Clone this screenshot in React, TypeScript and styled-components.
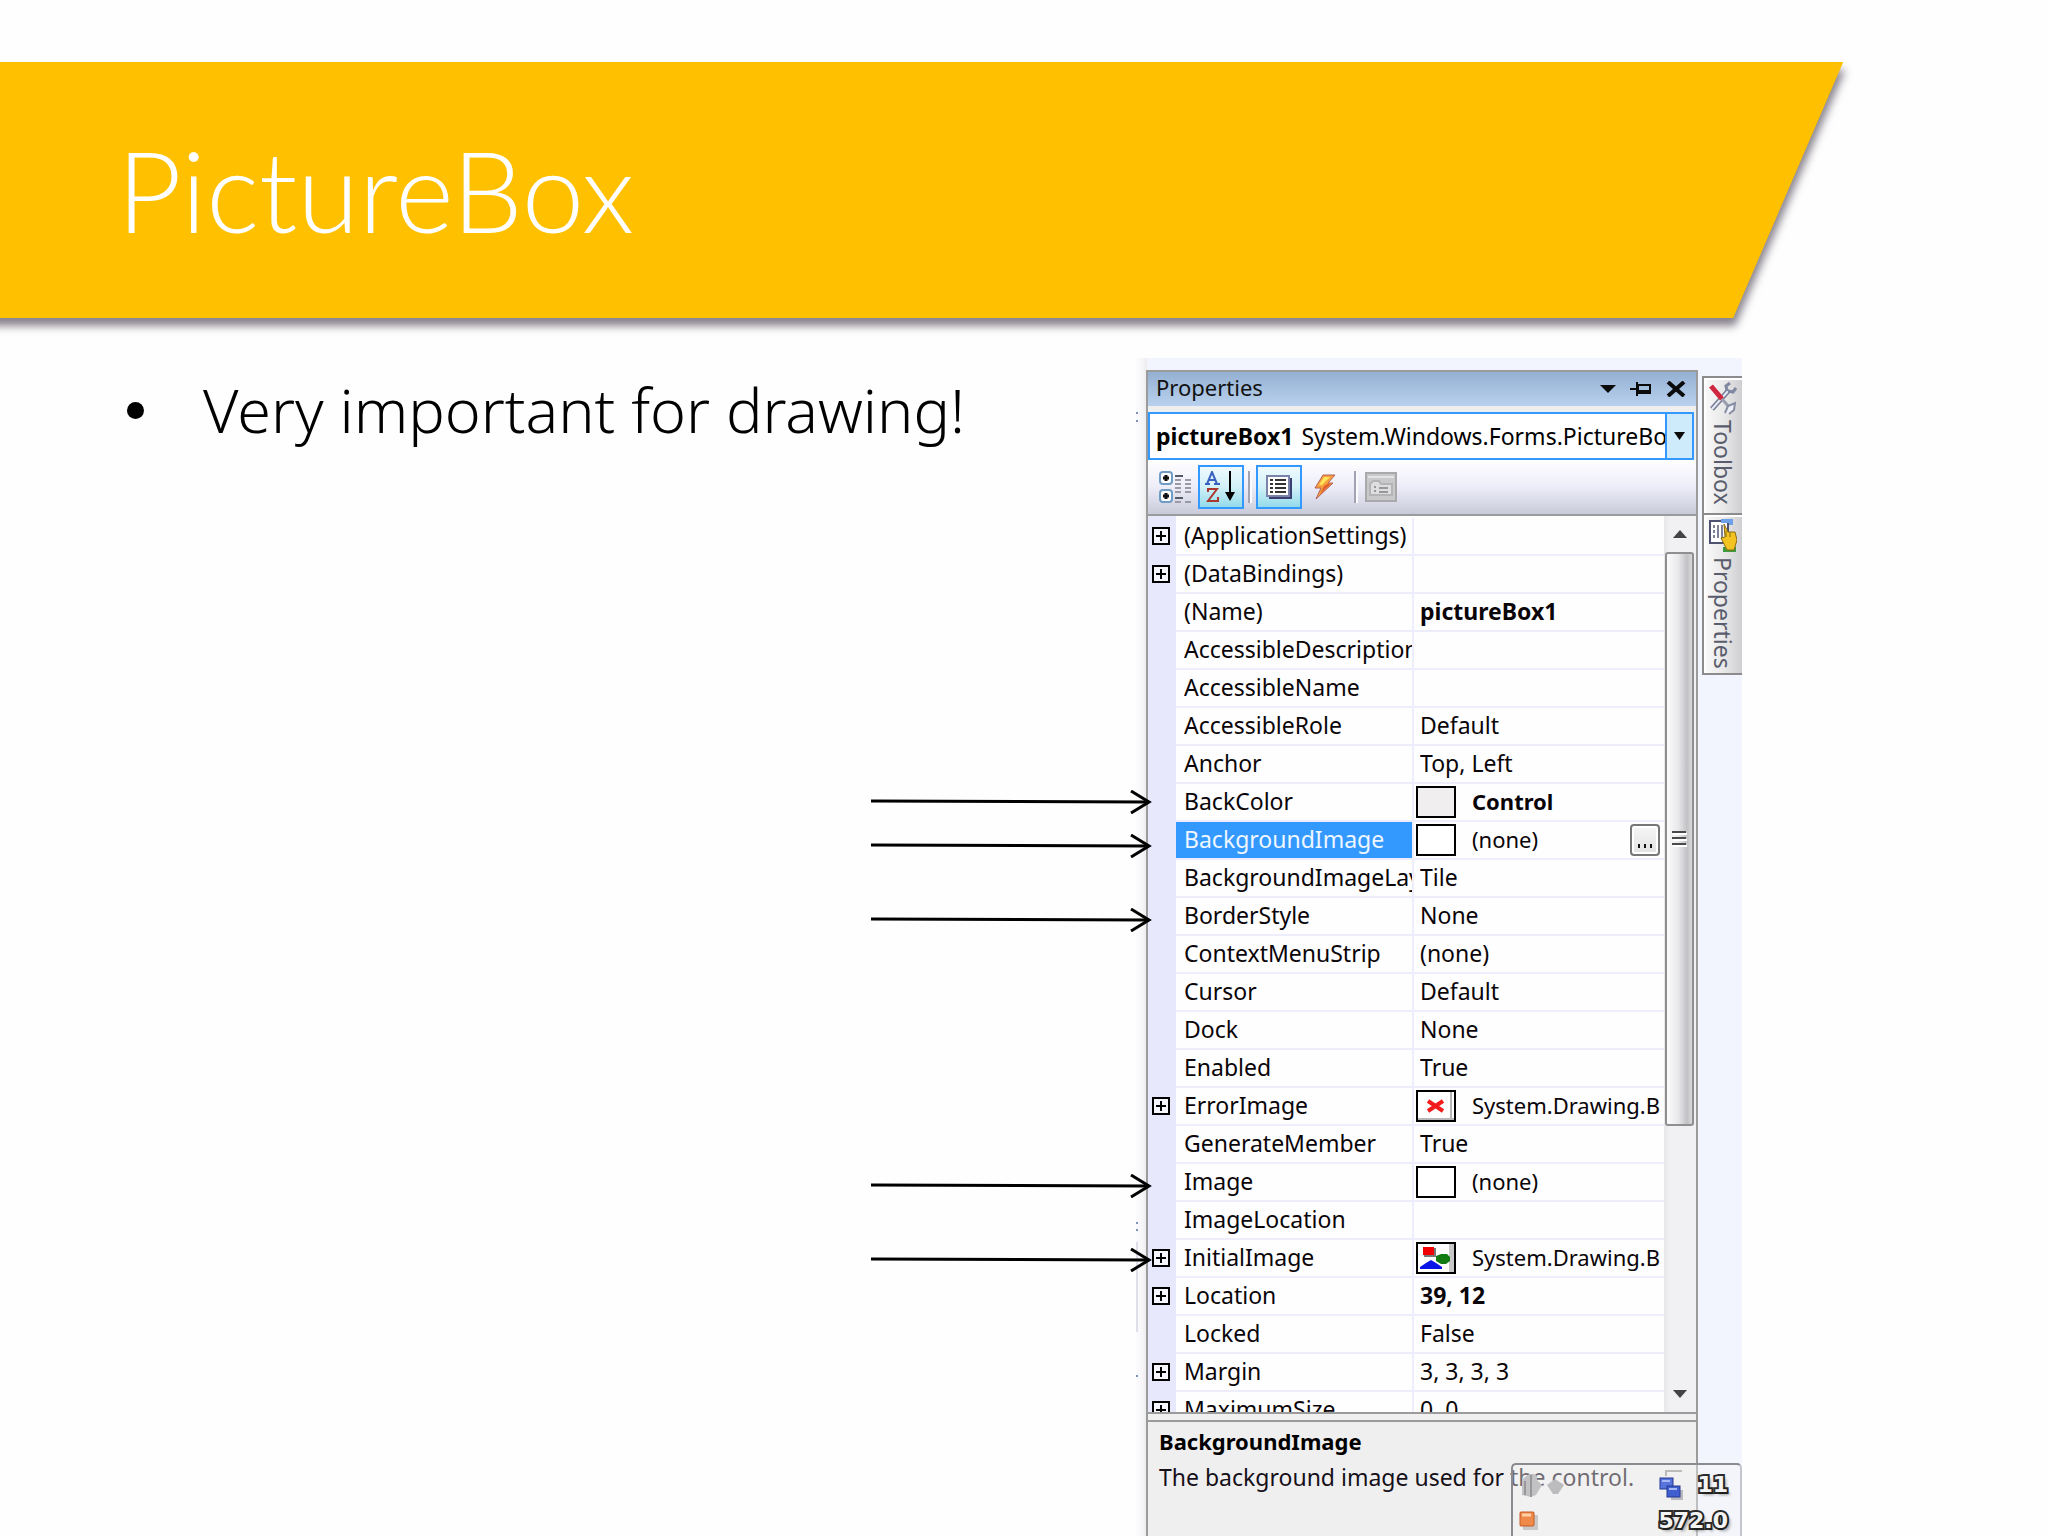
import React from "react";
import styled, { createGlobalStyle, css } from "styled-components";

const UI_FONT = `"Noto Sans", "Open Sans", sans-serif`;
const BLUE = "#3399ff";
const LINE = "#9b9b9b";

const GlobalStyle = createGlobalStyle`
  *, *::before, *::after { box-sizing: border-box; }
  body { margin: 0; background: #fefefe; color: #000; }
  button { margin: 0; padding: 0; border: 0; background: none; color: inherit; font: inherit; }
  svg { display: block; }
`;

const Slide = styled.main`
  display: flex;
  flex-direction: column;
  min-height: 100vh;
  padding-top: 62px;
  overflow: hidden;
`;

const BannerShadow = styled.header`
  width: 90%;
  filter: drop-shadow(2px 8px 4px rgba(40, 30, 50, 0.55));
`;

const Banner = styled.div`
  display: flex;
  align-items: center;
  height: 256px;
  margin-left: -20px;
  padding: 0 137px;
  background: #ffc000;
  clip-path: polygon(0 0, 100% 0, calc(100% - 110px) 100%, 0 100%);
`;

const Title = styled.h1`
  margin: 0;
  color: #fff;
  font: 300 112px/130px Lato, sans-serif;
`;

const Body = styled.div`
  display: grid;
  flex: 1;
  grid-template-columns: minmax(0, 1fr) 606px;
  margin-top: 40px;
  padding-right: 306px;
`;

const Bullets = styled.ul`
  margin: 0;
  padding: 12px 0 0 127px;
  list-style: none;
`;

const Bullet = styled.li`
  display: flex;
  align-items: center;
  gap: 59px;
  font: 300 61px/80px ${UI_FONT};
  white-space: nowrap;

  &::before {
    content: "";
    width: 17px;
    height: 17px;
    border-radius: 50%;
    background: #000;
  }
`;

const Figure = styled.section`
  position: relative;
  display: flex;
  align-items: stretch;
  gap: 4px;
  padding: 12px 0 0 10px;
  background: linear-gradient(90deg, #fbfbfd, #f7f5f7 6px, #ededf0 10px, #f3f5fe 12px);
  font: 400 23px/32px ${UI_FONT};
`;

const Panel = styled.div`
  display: flex;
  flex-direction: column;
  width: 552px;
  border: 2px solid ${LINE};
  border-bottom: 0;
  background: #f0eff0;
`;

const TitleBar = styled.div`
  display: flex;
  align-items: flex-start;
  gap: 14px;
  height: 34px;
  padding: 0 10px 0 8px;
  background: linear-gradient(#94b0d2, #b9d1ee);
`;

const PanelTitle = styled.h2`
  flex: 1;
  margin: 0;
  color: #111;
  font-size: 22px;
  font-weight: 400;
  line-height: 30px;
`;

const BarButton = styled.button`
  display: flex;
  align-items: center;
  height: 34px;
`;

const Combo = styled.label`
  position: relative;
  display: flex;
  height: 48px;
  margin: 6px 2px 0 0;
  border: 2px solid ${BLUE};
  background: #fff;
  line-height: 44px;
`;

const ComboFace = styled.span`
  display: flex;
  flex: 1;
  gap: 8px;
  min-width: 0;
  padding-left: 6px;
  overflow: hidden;
  white-space: nowrap;
`;

const ComboArrow = styled.span`
  display: grid;
  place-items: center;
  width: 27px;
  border-left: 2px solid ${BLUE};
  background: #cdebfa;
`;

const ComboSelect = styled.select`
  position: absolute;
  inset: 0;
  width: 100%;
  opacity: 0;
`;

const Toolbar = styled.div`
  display: flex;
  align-items: center;
  gap: 4px;
  height: 56px;
  padding-left: 8px;
  border-bottom: 2px solid ${LINE};
  background: linear-gradient(#fff, #ededf9 50%, #c9cad9);
`;

const ToolButton = styled.button<{ $active?: boolean }>`
  display: grid;
  place-items: center;
  width: 38px;
  height: 44px;
  ${(p) =>
    p.$active &&
    css`
      width: 46px;
      border: 2px solid ${BLUE};
      background: linear-gradient(#eefafd, #d3f1f8 50%, #93dbea);
    `}
`;

const Divider = styled.span<{ $spaced?: boolean }>`
  width: 4px;
  height: 32px;
  margin-left: ${(p) => (p.$spaced ? 6 : 0)}px;
  border-left: 2px solid #a2a2b0;
  border-right: 2px solid #fbfbff;
`;

const ListArea = styled.div`
  display: flex;
  height: 896px;
  overflow: hidden;
`;

const TableWrap = styled.div`
  flex: 1;
  min-width: 0;
  padding-top: 2px;
  background: linear-gradient(90deg, #e7e8fb 28px, #fefeff 28px);
`;

const Table = styled.table`
  width: 100%;
  table-layout: fixed;
  border-spacing: 0;
`;

const ExpandCell = styled.td`
  width: 28px;
  height: 38px;
  padding: 0 0 2px 4px;
  background: #e7e8fb;
`;

const NameCell = styled.th<{ $selected?: boolean }>`
  width: 238px;
  height: 38px;
  padding: 0 0 2px 8px;
  border-right: 2px solid #eeedfb;
  border-bottom: 2px solid #eeedfb;
  background: ${(p) => (p.$selected ? BLUE : "#fefeff")};
  background-clip: padding-box;
  color: ${(p) => (p.$selected ? "#eef6ff" : "#0a0508")};
  font-weight: 400;
  text-align: left;
  white-space: nowrap;
  overflow: hidden;
`;

const NameText = styled.span`
  display: block;
  overflow: hidden;
`;

const ValueCell = styled.td`
  height: 38px;
  padding: 0;
  border-bottom: 2px solid #eeedfb;
  color: #0a0508;
  overflow: hidden;
`;

const Value = styled.div<{ $bold?: boolean; $swatch?: boolean }>`
  display: flex;
  align-items: center;
  height: 36px;
  padding-left: ${(p) => (p.$swatch ? 2 : 6)}px;
  font-size: ${(p) => (p.$swatch ? 22 : 23)}px;
  font-weight: ${(p) => (p.$bold ? 700 : 400)};
  white-space: nowrap;
`;

const ValueText = styled.span`
  flex: 1;
  min-width: 0;
  padding-bottom: 2px;
  overflow: hidden;
`;

const Swatch = styled.span<{ $fill?: string }>`
  display: grid;
  place-items: center;
  flex: none;
  width: 40px;
  height: 32px;
  margin-right: 16px;
  border: 2px solid #000;
  background: ${(p) => p.$fill ?? "#fff"};
`;

const MoreButton = styled.button`
  display: flex;
  align-items: flex-end;
  justify-content: center;
  gap: 4px;
  width: 30px;
  height: 32px;
  margin-right: 4px;
  padding-bottom: 6px;
  border: 2px solid #777;
  border-radius: 4px;
  background: linear-gradient(#f6f6f6, #e2e2e4);
  box-shadow: inset 0 0 0 2px #fff;
`;

const Dot = styled.i`
  width: 2px;
  height: 4px;
  background: #111;
`;

const Scrollbar = styled.div`
  display: flex;
  flex-direction: column;
  width: 32px;
  background: linear-gradient(90deg, #e8e8ea, #f1f0f2 6px);
`;

const ScrollButton = styled.button`
  display: grid;
  place-items: center;
  height: 36px;
`;

const Thumb = styled.div`
  height: 574px;
  margin: 0 2px 0 1px;
  padding: 275px 0 0 5px;
  border: 2px solid #8f8f92;
  border-radius: 3px;
  background: linear-gradient(90deg, #fbfbfb, #e9e9eb 45%, #c2c2c6 80%, #d8d8da);
`;

const Track = styled.div`
  flex: 1;
`;

const Splitter = styled.div`
  height: 10px;
  border-top: 2px solid ${LINE};
  border-bottom: 2px solid ${LINE};
  background: #f1f0f1;
`;

const Description = styled.div`
  flex: 1;
  padding: 1px 8px 6px 11px;
  line-height: 36px;
`;

const DescriptionName = styled.h3`
  margin: 0;
  font-size: 22px;
  font-weight: 700;
`;

const DescriptionText = styled.p`
  margin: 0;
  color: #161018;
`;

const SideTabs = styled.nav`
  width: 40px;
  padding-top: 6px;
`;

const SideTab = styled.button<{ $length: number }>`
  display: flex;
  align-items: center;
  gap: 4px;
  width: 40px;
  height: ${(p) => p.$length}px;
  padding: 4px 6px 0 6px;
  border: 2px solid #8c8c8e;
  border-width: 2px 0 0 2px;
  background: linear-gradient(90deg, #fafafa, #e9e9e9 50%, #cfcfd2);
  box-shadow: inset 2px 2px 0 #fff;
  color: #595c6c;
  line-height: 30px;
  writing-mode: vertical-rl;

  &:last-child {
    border-bottom-width: 2px;
  }
`;

const Arrow = styled.svg<{ $top: number }>`
  position: absolute;
  left: -266px;
  top: ${(p) => p.$top}px;
`;

const EdgeMarks = styled.svg`
  position: absolute;
  left: 0;
  top: 0;
`;

const Gadget = styled.aside`
  position: absolute;
  right: 0;
  bottom: 0;
  width: 231px;
  height: 73px;
  padding: 2px 12px 0 6px;
  border: 2px solid #8a8a90;
  border-bottom: 0;
  border-right-color: #c4c4cc;
  border-radius: 5px 5px 0 0;
  background: rgba(244, 244, 244, 0.4);
`;

const GadgetRow = styled.div`
  display: flex;
  align-items: center;
  justify-content: space-between;
  height: 36px;
`;

const GadgetCount = styled.span`
  display: flex;
  align-items: center;
  gap: 14px;
`;

const Reading = styled.span`
  color: #f4f4f4;
  font: 700 22px/36px "DejaVu Sans", sans-serif;
  paint-order: stroke fill;
  -webkit-text-stroke: 4px #2b2b2b;
  text-shadow: 3px 3px 3px rgba(0, 0, 0, 0.35);
`;

const PlusBox = () => (
  <svg width="18" height="18" viewBox="0 0 18 18">
    <rect x="1" y="1" width="16" height="16" fill="#f6f6ff" stroke="#000" strokeWidth="2" />
    <path d="M4 9h10M9 4v10" stroke="#000" strokeWidth="2" />
  </svg>
);

const Triangle = ({ up, w = 16, color = "#0b0b0b" }: { up?: boolean; w?: number; color?: string }) => (
  <svg width={w} height="8" viewBox="0 0 16 8" preserveAspectRatio="none">
    <path d={up ? "M0 8L8 0l8 8z" : "M0 0h16L8 8z"} fill={color} />
  </svg>
);

const Pin = () => (
  <svg width="22" height="16" viewBox="0 0 22 16">
    <path d="M0 8h7M7 1v14M8 4h12v8M8 4v8" fill="none" stroke="#0b0b0b" strokeWidth="2" />
    <path d="M8 11h13" stroke="#0b0b0b" strokeWidth="4" />
  </svg>
);

const Cross = () => (
  <svg width="20" height="16" viewBox="0 0 20 16">
    <path d="M2 1l16 14M18 1L2 15" stroke="#0b0b0b" strokeWidth="4" />
  </svg>
);

const CategorizedIcon = () => (
  <svg width="32" height="32" viewBox="0 0 32 32">
    {[1, 19].map((y) => (
      <g key={y}>
        <rect x="1" y={y} width="12" height="12" rx="3" fill="#fff" stroke="#6f9cc4" strokeWidth="2" />
        <path d={`M4 ${y + 6}h6M7 ${y + 3}v6`} stroke="#111" strokeWidth="3" />
      </g>
    ))}
    <path d="M16 5h8M16 27h8" stroke="#555b66" strokeWidth="2" />
    <path d="M16 9h6M16 13h6M16 17h6M16 21h6M16 31h6M26 9h6M26 13h6M26 17h6M26 21h6M26 31h6" stroke="#9a9aa6" strokeWidth="2" />
  </svg>
);

const SortIcon = () => (
  <svg width="32" height="32" viewBox="0 0 32 32">
    <path d="M2 13L7 1l5 12M4 9h7M0 13h5M9 13h6" fill="none" stroke="#3a62c0" strokeWidth="2" />
    <path d="M3 21v-3h9L3 30h10v-4" fill="none" stroke="#a9382f" strokeWidth="2" />
    <path d="M25 0v24" stroke="#000" strokeWidth="2" />
    <path d="M20 21h10l-5 9z" fill="#000" />
  </svg>
);

const ListIcon = () => (
  <svg width="26" height="24" viewBox="0 0 26 24">
    <path d="M3 3h23v21H3z" fill="#3c3f73" />
    <path d="M1 1h22v20H1z" fill="#fff" stroke="#7b83a8" strokeWidth="2" />
    <path d="M4 5h3M4 9h3M4 13h3M4 17h3M9 5h11M9 9h11M9 13h11M9 17h11" stroke="#333" strokeWidth="2" />
  </svg>
);

const BoltIcon = () => (
  <svg width="22" height="26" viewBox="0 0 22 26">
    <path d="M9 1h12l-7 8h5L2 25l5-11H1z" fill="#f6a13c" stroke="#b4605a" strokeWidth="1" />
    <path d="M10 3h6l-8 8H5z" fill="#ffe35a" />
    <path d="M13 10h4L6 20l4-8z" fill="#e2602c" />
  </svg>
);

const PageIcon = () => (
  <svg width="32" height="30" viewBox="0 0 32 30">
    <path d="M1 1h30v28H1z" fill="#c9c9cc" stroke="#a9a9ac" strokeWidth="2" />
    <path d="M3 5h26" stroke="#e3e3e6" strokeWidth="2" />
    <path d="M5 23V12l3-3h6l2 3h11v11z" fill="#dededf" stroke="#b4b4b7" strokeWidth="2" />
    <path d="M9 15h2M9 19h2M14 16h9M14 20h9" stroke="#98989b" strokeWidth="2" />
  </svg>
);

const ErrorGlyph = () => (
  <svg width="36" height="28" viewBox="0 0 36 28">
    <path d="M33 0v28M0 27h36" stroke="#b6b6b6" strokeWidth="2" />
    <path d="M10 9l15 10M25 9L10 19" stroke="#f31b1b" strokeWidth="4" />
  </svg>
);

const ShapesGlyph = () => (
  <svg width="36" height="28" viewBox="0 0 36 28">
    <path d="M31 0h5v28h-5z" fill="#c8c8c8" />
    <path d="M6 4h12v9H6z" fill="#777" />
    <path d="M5 3h11v8H5z" fill="#f00000" />
    <path d="M18 12l5-2h6l3 3v4l-4 3h-5l-5-3z" fill="#117a11" />
    <path d="M2 25v-2l6-4 5-3 5 3 6 4v2z" fill="#0b14e6" />
  </svg>
);

const ToolboxIcon = () => (
  <svg width="28" height="34" viewBox="0 0 28 34">
    <path d="M3 27L20 8" stroke="#767c92" strokeWidth="5" />
    <path d="M3 27L20 8" stroke="#e8ecf8" strokeWidth="2" />
    <path d="M18 9l-1-5 4-3M19 9l5 1 3-4" fill="none" stroke="#8087a0" strokeWidth="3" />
    <path d="M2 4l11 13" stroke="#cf2740" strokeWidth="5" />
    <path d="M13 17l8 9" stroke="#9a9fb0" strokeWidth="3" />
    <path d="M16 31l3-7 7-3-1 7-5 4" fill="#eef0f8" stroke="#868ca2" strokeWidth="2" />
  </svg>
);

const PropertiesIcon = () => (
  <svg width="28" height="34" viewBox="0 0 28 34">
    <path d="M1 2h18v22H1z" fill="#fff" stroke="#4c5270" strokeWidth="2" />
    <path d="M12 2h10v4" fill="none" stroke="#6ea0ea" strokeWidth="4" />
    <path d="M5 6v3M5 11v3M5 16v3M9 6v13M13 6v13" stroke="#7d8298" strokeWidth="2" />
    <path d="M14 28h13v5H14z" fill="#3d9a3d" />
    <path d="M15 5l4 8 7 0 2 8-3 10h-7l-6-12 4-1z" fill="#f3c321" stroke="#8a6a10" strokeWidth="1" />
    <path d="M17 12v6M21 13v5" stroke="#8a6a10" strokeWidth="1" />
  </svg>
);

const Grip = () => (
  <svg width="16" height="18" viewBox="0 0 16 18">
    <path d="M0 3h14M0 9h14M0 15h14" stroke="#4a4a4a" strokeWidth="2" />
    <path d="M1 5h14M1 11h14M1 17h14" stroke="#fff" strokeWidth="2" />
  </svg>
);

const DiskIcon = () => (
  <svg width="46" height="28" viewBox="0 0 46 28">
    <path d="M3 24V9q9-10 15-4v4l5 5-6 10-5 2z" fill="#c2c2c4" />
    <path d="M6 24V10M12 26V4" stroke="#98989b" strokeWidth="2" />
    <path d="M28 14l8-6 9 6-6 9h-5z" fill="#bcbcbe" />
  </svg>
);

const CpuIcon = () => (
  <svg width="24" height="30" viewBox="0 0 24 30">
    <path d="M7 6V1h16" fill="none" stroke="#bbb" strokeWidth="2" />
    <path d="M12 20h12v10H12z" fill="#b9b9c0" />
    <rect x="1" y="8" width="13" height="11" fill="#5674dc" stroke="#25398f" strokeWidth="1" />
    <rect x="8" y="16" width="13" height="11" fill="#3f5fd0" stroke="#25398f" strokeWidth="1" />
    <path d="M3 11h8M10 19h8" stroke="#a5b8f5" strokeWidth="2" />
  </svg>
);

const OrangeIcon = () => (
  <svg width="20" height="20" viewBox="0 0 20 20">
    <path d="M4 4h15v15H4z" fill="#c9c9c9" />
    <rect x="1" y="1" width="14" height="14" rx="1" fill="#f08a4b" stroke="#c45a22" strokeWidth="1" />
    <path d="M3 4h9" stroke="#ffd0a8" strokeWidth="3" />
  </svg>
);

type Property = {
  name: string;
  value?: string;
  expand?: boolean;
  bold?: boolean;
  selected?: boolean;
  swatch?: "plain" | "control" | "error" | "shapes";
};

const properties: Property[] = [
  { name: "(ApplicationSettings)", expand: true },
  { name: "(DataBindings)", expand: true },
  { name: "(Name)", value: "pictureBox1", bold: true },
  { name: "AccessibleDescription" },
  { name: "AccessibleName" },
  { name: "AccessibleRole", value: "Default" },
  { name: "Anchor", value: "Top, Left" },
  { name: "BackColor", value: "Control", bold: true, swatch: "control" },
  { name: "BackgroundImage", value: "(none)", selected: true, swatch: "plain" },
  { name: "BackgroundImageLay", value: "Tile" },
  { name: "BorderStyle", value: "None" },
  { name: "ContextMenuStrip", value: "(none)" },
  { name: "Cursor", value: "Default" },
  { name: "Dock", value: "None" },
  { name: "Enabled", value: "True" },
  { name: "ErrorImage", value: "System.Drawing.B", expand: true, swatch: "error" },
  { name: "GenerateMember", value: "True" },
  { name: "Image", value: "(none)", swatch: "plain" },
  { name: "ImageLocation" },
  { name: "InitialImage", value: "System.Drawing.B", expand: true, swatch: "shapes" },
  { name: "Location", value: "39, 12", expand: true, bold: true },
  { name: "Locked", value: "False" },
  { name: "Margin", value: "3, 3, 3, 3", expand: true },
  { name: "MaximumSize", value: "0, 0", expand: true },
];

const arrowTops = [432, 476, 550, 816, 890];

const PropertyRow = ({ name, value, expand, bold, selected, swatch }: Property) => (
  <tr>
    <ExpandCell>
      {expand && (
        <button aria-label={`Expand ${name}`}>
          <PlusBox />
        </button>
      )}
    </ExpandCell>
    <NameCell scope="row" $selected={selected}>
      <NameText>{name}</NameText>
    </NameCell>
    <ValueCell>
      <Value $bold={bold} $swatch={!!swatch}>
        {swatch && (
          <Swatch $fill={swatch === "control" ? "#f0eeee" : undefined}>
            {swatch === "error" && <ErrorGlyph />}
            {swatch === "shapes" && <ShapesGlyph />}
          </Swatch>
        )}
        <ValueText>{value}</ValueText>
        {selected && (
          <MoreButton aria-label="Browse">
            <Dot />
            <Dot />
            <Dot />
          </MoreButton>
        )}
      </Value>
    </ValueCell>
  </tr>
);

export default function App() {
  return (
    <Slide>
      <GlobalStyle />
      <BannerShadow>
        <Banner>
          <Title>PictureBox</Title>
        </Banner>
      </BannerShadow>
      <Body>
        <Bullets>
          <Bullet>Very important for drawing!</Bullet>
        </Bullets>
        <Figure>
          <EdgeMarks width="4" height="1060" viewBox="0 0 4 1060">
            <path d="M0 55h2M0 63h2M0 865h2M0 872h2M0 1018h2" stroke="#7f93b5" strokeWidth="2" />
            <path d="M1 884v90" stroke="#c3c3d6" strokeWidth="1" />
          </EdgeMarks>
          <Panel>
            <TitleBar>
              <PanelTitle>Properties</PanelTitle>
              <BarButton aria-label="Window position">
                <Triangle />
              </BarButton>
              <BarButton aria-label="Auto hide">
                <Pin />
              </BarButton>
              <BarButton aria-label="Close">
                <Cross />
              </BarButton>
            </TitleBar>
            <Combo>
              <ComboFace>
                <b>pictureBox1</b>
                <span>System.Windows.Forms.PictureBo</span>
              </ComboFace>
              <ComboArrow>
                <Triangle w={11} />
              </ComboArrow>
              <ComboSelect aria-label="Component">
                <option>pictureBox1</option>
              </ComboSelect>
            </Combo>
            <Toolbar>
              <ToolButton aria-label="Categorized">
                <CategorizedIcon />
              </ToolButton>
              <ToolButton $active aria-label="Alphabetical">
                <SortIcon />
              </ToolButton>
              <Divider />
              <ToolButton $active aria-label="Properties">
                <ListIcon />
              </ToolButton>
              <ToolButton aria-label="Events">
                <BoltIcon />
              </ToolButton>
              <Divider $spaced />
              <ToolButton disabled aria-label="Property pages">
                <PageIcon />
              </ToolButton>
            </Toolbar>
            <ListArea>
              <TableWrap>
                <Table>
                  <colgroup>
                    <col width="28" />
                    <col width="238" />
                    <col />
                  </colgroup>
                  <tbody>
                    {properties.map((p) => (
                      <PropertyRow key={p.name} {...p} />
                    ))}
                  </tbody>
                </Table>
              </TableWrap>
              <Scrollbar>
                <ScrollButton aria-label="Scroll up">
                  <Triangle up w={14} color="#444" />
                </ScrollButton>
                <Thumb>
                  <Grip />
                </Thumb>
                <Track />
                <ScrollButton aria-label="Scroll down">
                  <Triangle w={14} color="#444" />
                </ScrollButton>
              </Scrollbar>
            </ListArea>
            <Splitter />
            <Description>
              <DescriptionName>BackgroundImage</DescriptionName>
              <DescriptionText>The background image used for the control.</DescriptionText>
            </Description>
          </Panel>
          <SideTabs>
            <SideTab $length={137}>
              <ToolboxIcon />
              Toolbox
            </SideTab>
            <SideTab $length={162}>
              <PropertiesIcon />
              Properties
            </SideTab>
          </SideTabs>
          <Gadget>
            <GadgetRow>
              <DiskIcon />
              <GadgetCount>
                <CpuIcon />
                <Reading>11</Reading>
              </GadgetCount>
            </GadgetRow>
            <GadgetRow>
              <OrangeIcon />
              <Reading>572.0</Reading>
            </GadgetRow>
          </Gadget>
          {arrowTops.map((top) => (
            <Arrow key={top} $top={top} width="282" height="24" viewBox="0 0 282 24">
              <path d="M1 11L279 12" stroke="#000" strokeWidth="3" />
              <path d="M261 1L279 12L261 23" fill="none" stroke="#000" strokeWidth="3" />
            </Arrow>
          ))}
        </Figure>
      </Body>
    </Slide>
  );
}
